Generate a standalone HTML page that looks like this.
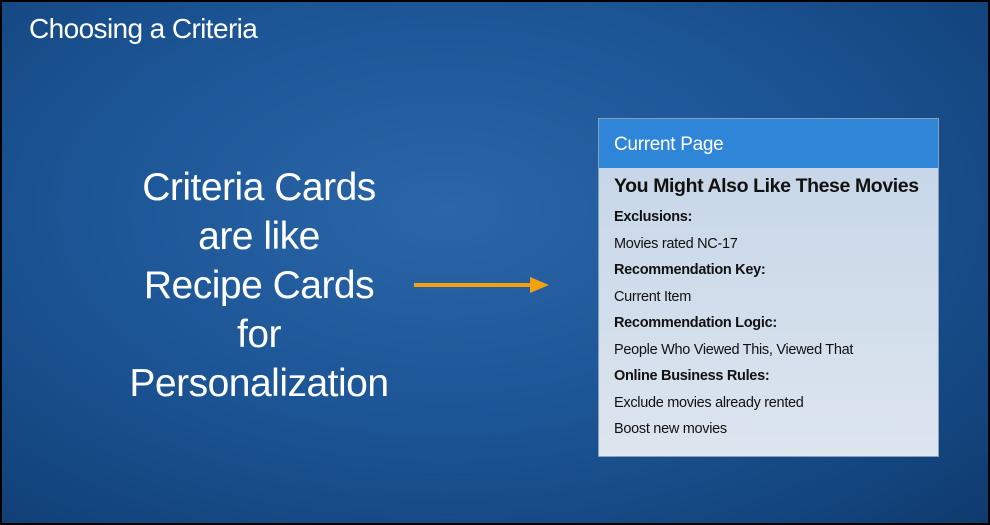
<!DOCTYPE html>
<html><head><style>
*{margin:0;padding:0;box-sizing:border-box}
body{width:990px;height:525px;overflow:hidden;background:#000;font-family:"Liberation Sans",sans-serif}
.bg{position:absolute;left:2px;top:2px;width:986px;height:521px;background:radial-gradient(ellipse at 45% 40%,#2a66a8 0%,#1d5697 45%,#134680 80%,#0f3a6c 100%)}
.t{position:absolute;left:29px;top:13px;color:#fff;font-size:28px;letter-spacing:-0.6px}
.big{position:absolute;left:100px;width:318px;top:163px;text-align:center;color:#fff;font-size:39px;line-height:49px;letter-spacing:-0.5px}
.card{position:absolute;left:598px;top:118px;width:341px;height:339px;background:linear-gradient(180deg,#c3d4e7,#dde5ee);border:1px solid #8aa0b8}
.hd{height:49px;background:#2f86d8;color:#fff;font-size:19px;padding:15px 15px;letter-spacing:-0.3px}
.bd{padding:7px 15px;color:#111;font-size:14.5px;letter-spacing:-0.3px}
.bd h2{font-size:19.5px;font-weight:bold;margin-bottom:6px;letter-spacing:-0.4px}
.bd p{height:26.5px;line-height:26.5px}
.bd b{font-weight:bold}
</style></head><body>
<div class="bg"></div>
<div class="t">Choosing a Criteria</div>
<div class="big">Criteria Cards<br>are like<br>Recipe Cards<br>for<br>Personalization</div>
<svg style="position:absolute;left:412px;top:275px" width="140" height="20"><line x1="2" y1="10" x2="122" y2="10" stroke="#f5a00f" stroke-width="4"/><polygon points="118,2 137,10 118,18" fill="#f5a00f"/></svg>
<div class="card"><div class="hd">Current Page</div><div class="bd">
<h2>You Might Also Like These Movies</h2>
<p><b>Exclusions:</b></p><p>Movies rated NC-17</p>
<p><b>Recommendation Key:</b></p><p>Current Item</p>
<p><b>Recommendation Logic:</b></p><p>People Who Viewed This, Viewed That</p>
<p><b>Online Business Rules:</b></p><p>Exclude movies already rented</p><p>Boost new movies</p>
</div></div>
</body></html>
